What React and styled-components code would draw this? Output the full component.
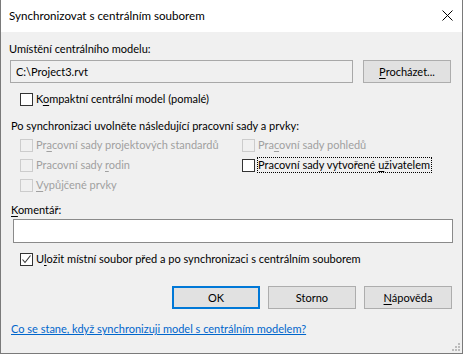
import React from 'react'
import styled, { createGlobalStyle } from 'styled-components'

const GlobalStyle = createGlobalStyle`
    html, body {
        margin: 0;
        padding: 0;
        background: #ffffff;
    }
    body {
        font-family: Lato, "Liberation Sans", sans-serif;
        font-size: 11px;
        color: #000000;
    }
`;

const Window = styled.div`
    width: 463px;
    height: 354px;
    box-sizing: border-box;
    border: 1px solid #7a7a7a;
    border-top: none;
    display: flex;
    flex-direction: column;
    position: relative;
    background: #f0f0f0;
`;

const TitleBar = styled.div`
    height: 31px;
    flex-shrink: 0;
    background: #ffffff;
    display: flex;
    align-items: center;
    justify-content: space-between;
    padding: 0 9px 1px 8px;
    font-size: 11.6px;
`;

const Content = styled.div`
    flex: 1;
    display: flex;
    flex-direction: column;
    padding: 0 10px 0 8px;
`;

const Label = styled.div`
    line-height: 16px;
    height: 16px;
    margin-top: ${p => p.$top}px;
    padding-left: ${p => p.$indent || 0}px;
    white-space: nowrap;
`;

const PathRow = styled.div`
    display: flex;
    align-items: center;
    gap: 10px;
    margin-top: 3px;
    padding-left: 1px;
`;

const TextBox = styled.div`
    box-sizing: border-box;
    width: ${p => p.$width}px;
    height: ${p => p.$height}px;
    border: 1px solid ${p => (p.$readOnly ? '#a8a8a8' : '#8a8a8a')};
    background: ${p => (p.$readOnly ? '#f0f0f0' : '#ffffff')};
    padding-left: 5px;
    line-height: ${p => p.$height - 2}px;
    margin-left: ${p => p.$left || 0}px;
    margin-top: ${p => p.$top || 0}px;
`;

const Button = styled.div`
    box-sizing: border-box;
    width: 88px;
    height: 23px;
    display: flex;
    align-items: center;
    justify-content: center;
    background: #e1e1e1;
    border: ${p => (p.$default ? '2px solid #0078d7' : '1px solid #adadad')};
    white-space: nowrap;
`;

const CheckRow = styled.div`
    display: flex;
    align-items: center;
    height: ${p => p.$height || 16}px;
    margin-top: ${p => p.$top || 0}px;
    padding-left: ${p => p.$indent || 0}px;
    color: ${p => (p.$disabled ? '#a0a0a0' : '#000000')};
    white-space: nowrap;
`;

const Box = styled.span`
    box-sizing: border-box;
    width: 13px;
    height: 13px;
    flex-shrink: 0;
    border: 1px solid ${p => (p.$disabled ? '#cccccc' : '#333333')};
    background: ${p => (p.$disabled ? '#f0f0f0' : '#ffffff')};
    margin-right: 3px;
    display: flex;
    align-items: center;
    justify-content: center;
`;

const CheckText = styled.span`
    line-height: 14px;
    padding: 0 1px 0 0;
    border: 1px dotted ${p => (p.$focused ? '#000000' : 'transparent')};
    margin-left: -1px;
`;

const Worksets = styled.div`
    display: grid;
    grid-template-columns: 222px auto;
    grid-auto-rows: 20px;
    margin-top: 1px;
    padding-left: 11px;
`;

const Buttons = styled.div`
    display: flex;
    justify-content: flex-end;
    gap: 8px;
    margin-top: 19px;
`;

const Link = styled.a`
    color: #0066cc;
    text-decoration: underline;
    line-height: 16px;
    margin-top: 12px;
    padding-left: 2px;
    cursor: pointer;
    white-space: nowrap;
`;

const Key = styled.u`
    text-decoration: underline;
    text-underline-offset: 2px;
`;

const Grip = styled.svg`
    position: absolute;
    right: 1px;
    bottom: 1px;
`;

const Check = ({ label, disabled, checked, focused }) => (
    <>
        <Box $disabled={disabled}>
            {checked && (
                <svg width="11" height="11" viewBox="0 0 11 11">
                    <polyline points="1.5,5.5 4,8.5 9.5,1.5" fill="none" stroke="#333333" strokeWidth="1.1" />
                </svg>
            )}
        </Box>
        <CheckText $focused={focused}>{label}</CheckText>
    </>
);

const App = () => {
    return (
        <>
            <GlobalStyle />
            <Window>
                <TitleBar>
                    <span>Synchronizovat s centrálním souborem</span>
                    <svg width="11" height="11" viewBox="0 0 11 11">
                        <path d="M0.5 0.5 L10.5 10.5 M10.5 0.5 L0.5 10.5" stroke="#000000" strokeWidth="1" />
                    </svg>
                </TitleBar>
                <Content>
                    <Label $top={9}>Umístění centrálního modelu:</Label>
                    <PathRow>
                        <TextBox $width={343} $height={23} $readOnly>C:\Project3.rvt</TextBox>
                        <Button><span><Key>P</Key>rocházet...</span></Button>
                    </PathRow>
                    <CheckRow $top={8} $indent={11}>
                        <Check label={<>K<Key>o</Key>mpaktní centrální model (pomalé)</>} />
                    </CheckRow>
                    <Label $top={11} $indent={2}>Po synchronizaci uvolněte následující pracovní sady a prvky:</Label>
                    <Worksets>
                        <CheckRow $height={20} $disabled>
                            <Check disabled label={<>Pr<Key>a</Key>covní sady projektových standardů</>} />
                        </CheckRow>
                        <CheckRow $height={20} $disabled>
                            <Check disabled label={<>Pra<Key>c</Key>ovní sady pohledů</>} />
                        </CheckRow>
                        <CheckRow $height={20} $disabled>
                            <Check disabled label={<>Pracovní sady <Key>r</Key>odin</>} />
                        </CheckRow>
                        <CheckRow $height={20}>
                            <Check focused label={<>Pracovní sady vytvořené <Key>u</Key>živatelem</>} />
                        </CheckRow>
                        <CheckRow $height={20} $disabled>
                            <Check disabled label={<><Key>V</Key>ypůjčené prvky</>} />
                        </CheckRow>
                    </Worksets>
                    <Label $top={7} $indent={2}><Key>K</Key>omentář:</Label>
                    <TextBox $width={440} $height={24} $left={4} $top={1} />
                    <CheckRow $top={8} $indent={11}>
                        <Check checked label={<>U<Key>l</Key>ožit místní soubor před a po synchronizaci s centrálním souborem</>} />
                    </CheckRow>
                    <Buttons>
                        <Button $default>OK</Button>
                        <Button>Storno</Button>
                        <Button><span><Key>N</Key>ápověda</span></Button>
                    </Buttons>
                    <Link>Co se stane, když synchronizuji model s centrálním modelem?</Link>
                </Content>
                <Grip width="10" height="10" viewBox="0 0 10 10">
                    {[[7, 1], [7, 4], [4, 4], [7, 7], [4, 7], [1, 7]].map(([x, y]) => (
                        <rect key={`${x}-${y}`} x={x} y={y} width="2" height="2" fill="#bcbcbc" />
                    ))}
                </Grip>
            </Window>
        </>
    )
}

export default App
